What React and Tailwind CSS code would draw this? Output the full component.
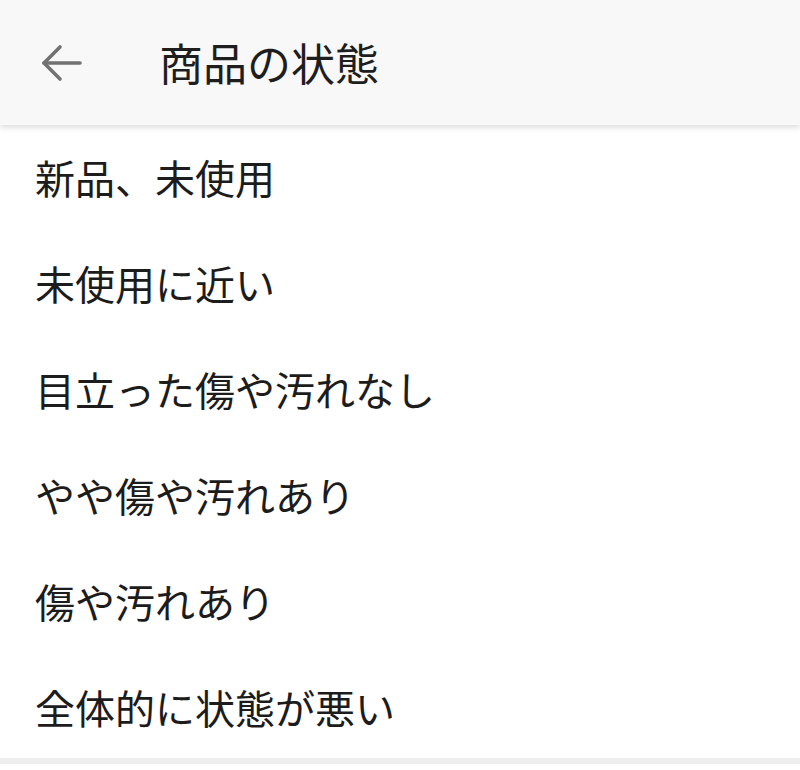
const conditions = [
  '新品、未使用',
  '未使用に近い',
  '目立った傷や汚れなし',
  'やや傷や汚れあり',
  '傷や汚れあり',
  '全体的に状態が悪い',
];

const font = { fontFamily: '"Noto Sans CJK JP", "Noto Sans", sans-serif' };

export default function App() {
  return (
    <div className="w-[800px] h-[770px] bg-white overflow-hidden flex flex-col" style={font}>
      {/* Header */}
      <header className="relative z-10 h-[125px] shrink-0 bg-[#f8f8f8] flex items-center shadow-[0_3px_5px_rgba(0,0,0,0.12)]">
        <button className="w-[159px] h-full flex items-center pl-[41px] text-[#727272]">
          <svg width="42" height="38" viewBox="0 0 42 38" fill="none" stroke="currentColor" strokeWidth="3.6" strokeLinecap="round" strokeLinejoin="round">
            <path d="M39 19H3" />
            <path d="M19 3L3 19l16 16" />
          </svg>
        </button>
        <h1 className="text-[44px] leading-none text-[#1e1e1e] pb-[2px]">商品の状態</h1>
      </header>

      {/* Options */}
      <ul className="flex flex-col">
        {conditions.map((c) => (
          <li
            key={c}
            className="h-[106px] flex items-center pl-[35px] text-[40px] leading-none text-[#1c1c1c] pb-[2px]"
          >
            {c}
          </li>
        ))}
      </ul>
      <div className="h-[6px] bg-[#eeeeee] mt-[-3px]" />
      <div className="flex-1 bg-white" />
    </div>
  );
}
